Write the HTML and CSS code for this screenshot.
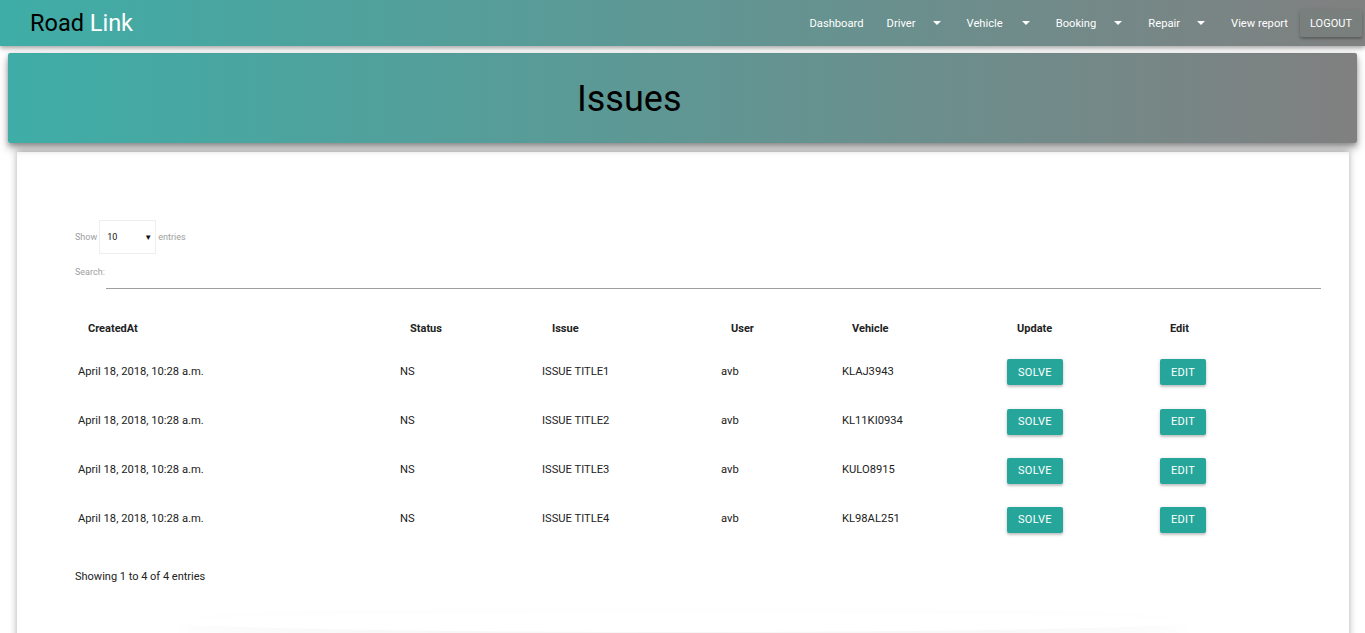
FILE: index.html
```html
<!DOCTYPE html>
<html>
<head>
<meta charset="utf-8">
<title>Issues</title>
<link rel="stylesheet" href="styles.css">
</head>
<body>
<nav class="navbar">
  <div class="brand"><span class="brand-dark">Road</span> <span class="brand-light">Link</span></div>
  <ul class="menu">
    <li class="menu-item first">Dashboard</li>
    <li class="menu-item drop">Driver<span class="caret"></span></li>
    <li class="menu-item drop">Vehicle<span class="caret"></span></li>
    <li class="menu-item drop">Booking<span class="caret"></span></li>
    <li class="menu-item drop">Repair<span class="caret"></span></li>
    <li class="menu-item last">View report</li>
    <li><button class="logout">LOGOUT</button></li>
  </ul>
</nav>

<header class="banner">
  <h1 class="banner-title">Issues</h1>
</header>

<main class="card">
  <div class="length">
    <span>Show</span>
    <div class="select"><span>10</span><span class="select-arrow">▼</span></div>
    <span>entries</span>
  </div>
  <div class="search">
    <span>Search:</span>
    <div class="search-line"></div>
  </div>

  <table class="issues">
    <colgroup>
      <col class="c1"><col class="c2"><col class="c3"><col class="c4"><col class="c5"><col class="c6"><col class="c7">
    </colgroup>
    <thead>
      <tr><th>CreatedAt</th><th>Status</th><th>Issue</th><th>User</th><th>Vehicle</th><th>Update</th><th>Edit</th></tr>
    </thead>
    <tbody>
      <tr><td>April 18, 2018, 10:28 a.m.</td><td>NS</td><td>ISSUE TITLE1</td><td>avb</td><td>KLAJ3943</td><td><button class="btn">SOLVE</button></td><td><button class="btn">EDIT</button></td></tr>
      <tr><td>April 18, 2018, 10:28 a.m.</td><td>NS</td><td>ISSUE TITLE2</td><td>avb</td><td>KL11KI0934</td><td><button class="btn">SOLVE</button></td><td><button class="btn">EDIT</button></td></tr>
      <tr><td>April 18, 2018, 10:28 a.m.</td><td>NS</td><td>ISSUE TITLE3</td><td>avb</td><td>KULO8915</td><td><button class="btn">SOLVE</button></td><td><button class="btn">EDIT</button></td></tr>
      <tr><td>April 18, 2018, 10:28 a.m.</td><td>NS</td><td>ISSUE TITLE4</td><td>avb</td><td>KL98AL251</td><td><button class="btn">SOLVE</button></td><td><button class="btn">EDIT</button></td></tr>
    </tbody>
  </table>

  <div class="info">Showing 1 to 4 of 4 entries</div>
  <div class="footer-shade"></div>
</main>
</body>
</html>
```

FILE: styles.css
```css
* { box-sizing: border-box; }
html, body { margin: 0; padding: 0; background: #fff; overflow: hidden; }
body { font-family: Roboto, "Liberation Sans", sans-serif; height: 633px; }

.navbar {
  height: 46px;
  display: flex;
  align-items: center;
  justify-content: space-between;
  background: linear-gradient(to right, #3fada7, #808080);
  box-shadow: 0 2px 4px rgba(0,0,0,0.25), 0 3px 6px rgba(0,0,0,0.12);
  padding-left: 30px;
  padding-right: 3px;
  position: relative;
  z-index: 2;
}
.brand { font-size: 23.5px; line-height: 46px; }
.brand-dark { color: #000; }
.brand-light { color: #fff; }

.menu { list-style: none; margin: 0; padding: 0; display: flex; align-items: center; height: 46px; }
.menu-item { color: #fff; font-size: 11.2px; padding: 0 11px; display: flex; align-items: center; }
.menu-item.first { padding-right: 12px; }
.menu-item.last { padding-right: 12px; }
.menu-item.drop { padding-right: 15px; }
.caret {
  display: inline-block;
  width: 0; height: 0;
  border-left: 4px solid transparent;
  border-right: 4px solid transparent;
  border-top: 4px solid #fff;
  margin-left: 17px;
}
.menu-item.drop:nth-child(3) .caret { margin-left: 19px; }
.menu-item.drop:nth-child(4) .caret { margin-left: 18px; }
.menu-item.drop:nth-child(5) .caret { margin-left: 17px; }

.logout {
  font-family: Roboto, "Liberation Sans", sans-serif;
  font-size: 11px;
  color: #fff;
  background: #787f7d;
  border: none;
  border-radius: 2px;
  height: 27px;
  width: 62px;
  padding: 0;
  margin-top: 1px;
  box-shadow: 0 2px 2px rgba(0,0,0,0.18), 0 1px 4px rgba(0,0,0,0.15);
}

.banner {
  margin: 7px 8px 0 8px;
  height: 90px;
  background: linear-gradient(to right, #3fada7, #808080);
  border-radius: 2px;
  box-shadow: 0 5px 8px rgba(0,0,0,0.35), 0 2px 4px rgba(0,0,0,0.2);
  display: flex;
  align-items: center;
  position: relative;
  z-index: 1;
}
.banner-title {
  margin: 0;
  font-weight: 400;
  font-size: 36px;
  color: #000;
  padding-left: 569px;
  line-height: 1;
  padding-top: 2px;
}

.card {
  margin: 9px 16px 0 17px;
  height: 600px;
  background: #fff;
  box-shadow: 0 -2px 8px rgba(0,0,0,0.22), 0 0 6px rgba(0,0,0,0.12);
  padding: 68px 28px 0 58px;
  position: relative;
}

.length {
  display: flex;
  align-items: center;
  font-size: 9px;
  color: #9e9e9e;
  height: 34px;
}
.select {
  width: 57px;
  height: 34px;
  margin: 0 2px 0 2px;
  border: 1px solid #eeeeee;
  display: flex;
  align-items: center;
  justify-content: space-between;
  padding: 0 3px 0 7px;
  color: #111;
  font-size: 9px;
}
.select-arrow { font-size: 8px; }

.search {
  display: flex;
  align-items: flex-start;
  font-size: 9px;
  color: #9e9e9e;
  margin-top: 11px;
}
.search span { margin-top: 2px; }
.search-line {
  flex: 1;
  height: 24px;
  border-bottom: 1px solid #9e9e9e;
  margin-left: 1px;
}

.issues {
  border-collapse: collapse;
  table-layout: fixed;
  width: 1246px;
  margin-top: 22px;
  font-size: 11.2px;
  color: #222;
}
.c1 { width: 322px; }
.c2 { width: 142px; }
.c3 { width: 179px; }
.c4 { width: 121px; }
.c5 { width: 165px; }
.c6 { width: 153px; }
.c7 { width: 164px; }

.issues th {
  text-align: left;
  font-weight: 700;
  font-size: 11px;
  padding: 0 3px 0 13px;
  height: 35px;
  vertical-align: middle;
}
.issues td {
  padding: 0 3px;
  height: 49px;
  vertical-align: middle;
}
.issues tbody tr:first-child td { height: 50px; }

.btn {
  font-family: Roboto, "Liberation Sans", sans-serif;
  font-size: 11px;
  color: #fff;
  background: #26a69a;
  border: none;
  border-radius: 2px;
  height: 26px;
  padding: 0 11px;
  margin-top: 2px;
  letter-spacing: 0.3px;
  box-shadow: 0 2px 2px rgba(0,0,0,0.14), 0 1px 4px rgba(0,0,0,0.16);
}

.info {
  font-size: 11px;
  color: #222;
  margin-top: 27px;
}

.footer-shade {
  position: absolute;
  left: 160px;
  right: 160px;
  top: 460px;
  height: 20px;
  border-radius: 50%;
  box-shadow: 0 10px 20px rgba(0,0,0,0.05);
}
```
